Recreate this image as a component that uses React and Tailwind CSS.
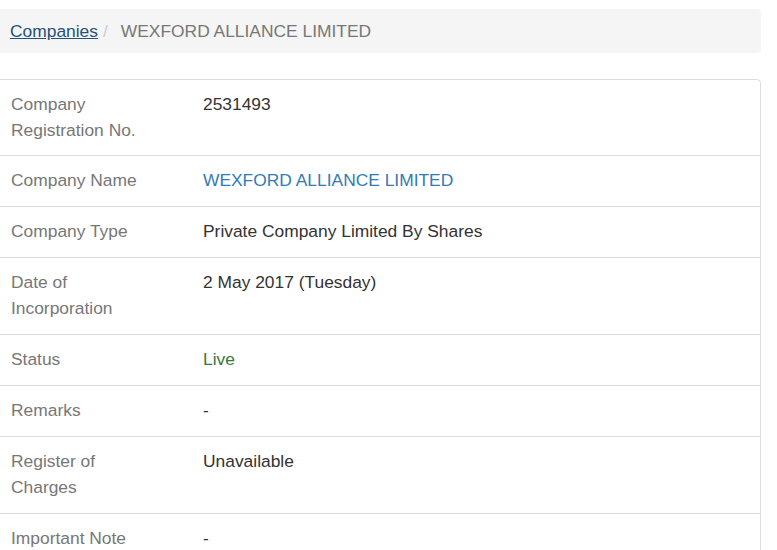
import React from "react";

const rows = [
  { label: ["Company", "Registration No."], value: "2531493" },
  { label: ["Company Name"], value: "WEXFORD ALLIANCE LIMITED", tone: "link" },
  { label: ["Company Type"], value: "Private Company Limited By Shares" },
  { label: ["Date of", "Incorporation"], value: "2 May 2017 (Tuesday)" },
  { label: ["Status"], value: "Live", tone: "live" },
  { label: ["Remarks"], value: "-" },
  { label: ["Register of", "Charges"], value: "Unavailable" },
  { label: ["Important Note"], value: "-" },
];

const toneClass = {
  link: "text-[#337ab7]",
  live: "text-[#3c763d]",
};

const App = () => {
  return (
    <div className="min-h-screen bg-white font-['Liberation_Sans',Arial,sans-serif] text-[17.4px] overflow-hidden">
      <div className="-ml-[5px] w-[766px] pt-[9px]">
        <div className="flex items-center h-[44px] px-[15px] bg-[#f5f5f5] rounded-[4px] leading-[28px]">
          <a href="#" className="text-[#23527c] underline">Companies</a>
          <span className="pl-[5px] pr-[8px] text-[#ccc]">/</span>
          <span className="pl-[5px] text-[#777]">WEXFORD ALLIANCE LIMITED</span>
        </div>

        <div className="mt-[26px] border border-[#ddd] rounded-[4px]">
          {rows.map((row, i) => {
            const pad =
              i === 0
                ? "pt-[12px] pb-[12px]"
                : row.label.length > 1
                ? "border-t border-[#ddd] pt-[12px] pb-[13px]"
                : "border-t border-[#ddd] pt-[12px] pb-[12.5px]";
            return (
              <div
                key={row.label.join(" ")}
                className={`grid grid-cols-[192px_1fr] leading-[25.5px] ${pad}`}
              >
                <div className="px-[15px] text-[#777]">
                  {row.label.map((l) => (
                    <div key={l}>{l}</div>
                  ))}
                </div>
                <div className={`px-[15px] ${toneClass[row.tone] || "text-[#333]"}`}>
                  {row.value}
                </div>
              </div>
            );
          })}
        </div>
      </div>
    </div>
  );
};

export default App;
